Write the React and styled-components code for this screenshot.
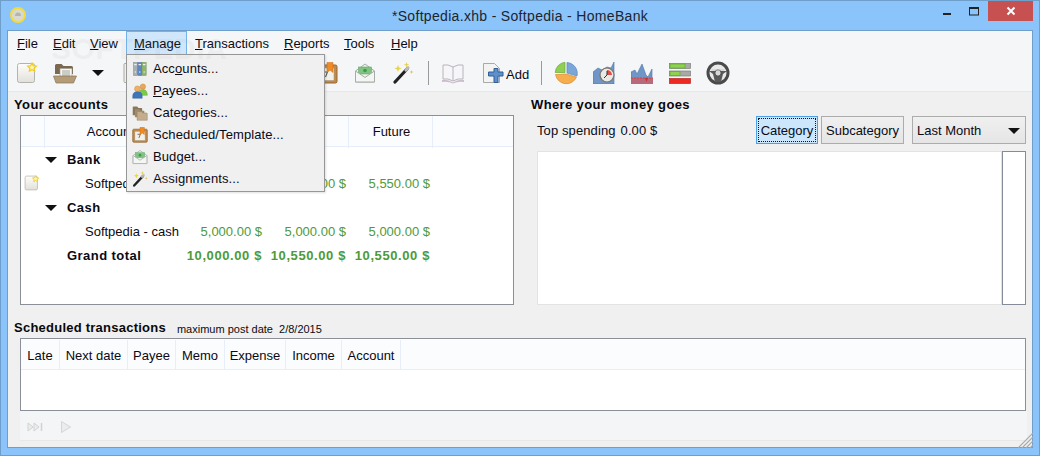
import React from "react";
import styled, { createGlobalStyle } from "styled-components";

const Global = createGlobalStyle`
  html, body { margin: 0; padding: 0; background: #8ac4fa; }
  body { font-family: "Liberation Sans", Arial, sans-serif; font-size: 13px; color: #0a0a14; }
`;

const Win = styled.div`
  position: relative; width: 1040px; height: 456px; box-sizing: border-box; overflow: hidden;
  background: #8ac4fa; border: 1px solid #6f9ecb; border-top-color: #6f9ecb;
  display: flex; flex-direction: column;
`;
const TitleBar = styled.div`
  position: relative; height: 29px; flex: none; display: flex; align-items: flex-start; justify-content: center;
`;
const AppIcon = styled.svg`
  position: absolute; left: 9px; top: 6px;
`;
const Title = styled.div`
  font-size: 14px; line-height: 16px; margin-top: 7px; color: #1c2430; letter-spacing: 0.32px;
`;
const Controls = styled.div`
  position: absolute; right: 6px; top: 0; display: flex; align-items: flex-start;
`;
const Ctl = styled.div`
  width: ${p => p.$w}px; height: 20px; display: flex; align-items: center; justify-content: center;
  background: ${p => p.$red ? "#c75050" : "transparent"};
`;
const Client = styled.div`
  margin-left: 6px; width: 1026px; height: 418px; box-sizing: border-box; flex: none;
  border: 1px solid #6f9ecb; background: #f0f0f0; display: flex; flex-direction: column;
`;
const MenuBar = styled.div`
  height: 24px; flex: none; background: #f5f6f8; display: flex; align-items: stretch; padding-left: 1px; box-sizing: border-box;
`;
const MenuTop = styled.div`
  position: relative; box-sizing: border-box; width: ${p => p.$w}px; padding-left: 8px; line-height: 25px;
  ${p => p.$open && "background:#cfe6fb; border:1px solid #72b1ea; padding-left:7px; line-height:23px;"}
`;
const Key = styled.span`text-decoration: underline; text-underline-offset: 1px;`;
const Popup = styled.div`
  position: absolute; left: -1px; top: 22px; width: 199px; height: 138px; box-sizing: border-box; z-index: 5;
  background: #f0f0f0; border: 1px solid #979797; padding: 3px 0 0 0; display: flex; flex-direction: column;
  box-shadow: 1px 1px 2px rgba(0,0,0,.12);
`;
const PopItem = styled.div`
  height: 22px; display: flex; align-items: center; gap: 5px; padding-left: 5px; line-height: 22px; white-space: nowrap; letter-spacing: 0.1px;
`;
const Toolbar = styled.div`
  height: 37px; flex: none; box-sizing: border-box; background: #f5f6f8; border-bottom: 1px solid #e6e7e9;
  display: flex; align-items: center;
`;
const Tool = styled.div`
  width: ${p => p.$w || 38}px; height: 24px; flex: none; display: flex; align-items: center; justify-content: center;
`;
const Sep = styled.div`
  width: 12px; height: 24px; flex: none; position: relative; display: flex; justify-content: center;
  &::before { content: ""; width: 1px; height: 100%; background: #9a9a9a; }
`;
const Spacer = styled.div`width: ${p => p.$w}px; flex: none;`;
const AddTool = styled.div`
  width: 63px; flex: none; display: flex; align-items: center; gap: 2px; padding-left: 10px; box-sizing: border-box; font-size: 13px;
`;
const AddLabel = styled.span`padding-top: 2px;`;
const Main = styled.div`
  flex: 1; padding: 4px 6px 0 6px; display: flex; flex-direction: column; min-height: 0;
`;
const Top = styled.div`display: flex; gap: 17px;`;
const LeftCol = styled.div`width: 500px; flex: none;`;
const RightCol = styled.div`width: 495px; flex: none;`;
const Heading = styled.div`
  font-weight: 700; line-height: 18px; height: 16px; letter-spacing: ${p => p.$ls ?? 0.38}px; color: #08080c; white-space: nowrap;
`;
const AccTable = styled.div`
  margin: 3px 0 0 6px; height: 190px; box-sizing: border-box; border: 1px solid #8a8f98; background: #fff; padding-top: 0;
`;
const AccHead = styled.div`
  display: grid; grid-template-columns: 24px 136px 84px 84px 84px 78px; height: 31px; box-sizing: border-box;
  background: #fbfcfd; border-bottom: 1px solid #e6eff9;
`;
const HeadCell = styled.div`
  text-align: center; line-height: 32px; padding-left: 2px; border-right: 1px solid #e6eff9; box-sizing: border-box;
`;
const AccRow = styled.div`
  display: grid; grid-template-columns: 24px 136px 84px 84px 84px; height: 24px; align-items: center; line-height: 22px;
  font-weight: ${p => p.$bold ? 700 : 400};
`;
const RowIcon = styled.div`display: flex; align-items: center; padding-left: 3px;`;
const Name = styled.div`
  padding-left: ${p => p.$indent}px; padding-top: 2px; display: flex; align-items: center; white-space: nowrap;
  ${p => p.$bold && "letter-spacing:0.45px;"}
`;
const Caret = styled.span`
  width: 0; height: 0; border-left: 6px solid transparent; border-right: 6px solid transparent; border-top: 6px solid #111;
  margin: 0 ${p => p.$mr || 0}px 0 ${p => p.$ml || 0}px;
`;
const Amount = styled.div`
  text-align: right; padding: 2px 3px 0 0; color: #4e9a36; white-space: nowrap; ${p => p.$bold && "letter-spacing:0.6px;"}
`;
const SpendRow = styled.div`
  margin-top: 4px; height: 28px; display: flex; align-items: center; padding-left: 6px; line-height: 20px;
`;
const SpendText = styled.div`flex: 1; display: flex; gap: 5px; letter-spacing: 0.1px; padding-top: 2px;`;
const Btn = styled.div`
  height: 28px; box-sizing: border-box; width: ${p => p.$w}px; flex: none; margin-left: ${p => p.$ml || 0}px; padding-top: 1px;
  border: 1px solid #acacac; background: linear-gradient(#f0f0f0, #e5e5e5);
  display: flex; align-items: center; justify-content: center; position: relative;
  ${p => p.$on && `
    background: #cce6fb; border-color: #4d9fe8;
    &::after { content: ""; position: absolute; inset: 1px; border: 1px dotted #111; }
  `}
`;
const Combo = styled(Btn)`
  justify-content: space-between; padding: 1px 5px 0 4px;
`;
const ChartRow = styled.div`margin: 7px 0 0 6px; height: 154px; display: flex;`;
const ChartArea = styled.div`
  width: 465px; flex: none; box-sizing: border-box; background: #fff; border: 1px solid #e3e3e3;
`;
const Legend = styled.div`
  width: 24px; flex: none; box-sizing: border-box; background: #fff; border: 1px solid #868b99;
`;
const SchedHead = styled.div`
  margin-top: 14px; display: flex; align-items: center; height: 16px; gap: 11px;
`;
const Small = styled.span`font-size: 11px; margin-top: 3px; white-space: pre;`;
const SchedTable = styled.div`
  margin: 3px 0 0 6px; height: 73px; flex: none; box-sizing: border-box; border: 1px solid #8a8f98; background: #fff; padding-top: 1px;
`;
const SchedHeadRow = styled.div`
  display: flex; height: 30px; box-sizing: border-box; background: #fbfcfd; border-bottom: 1px solid #e6eff9;
`;
const SchedCell = styled.div`
  flex: none; width: ${p => p.$w}px; box-sizing: border-box; text-align: center; line-height: 32px; border-right: 1px solid #e6eff9;
`;
const BottomBar = styled.div`
  margin-left: 6px; width: 1007px; height: 30px; flex: none; box-sizing: border-box; background: #f4f5f7; border-bottom: 1px solid #e8e8e8;
  display: flex; align-items: center; padding-left: 7px; gap: 17px; padding-top: 2px;
`;
const Grip = styled.svg`position: absolute; right: 6px; bottom: 7px; z-index: 3;`;
const Watermark = styled.div`
  position: absolute; left: 50px; top: 31px; font-size: 30px; font-weight: 700; letter-spacing: 0.5px; z-index: 9;
  color: rgba(170,170,170,.11); pointer-events: none; white-space: nowrap;
`;

const S = ({ size = 22, children }) => <svg width={size} height={size} viewBox="0 0 22 22">{children}</svg>;

const Star = ({ x, y, r = 3.4 }) => {
  const pts = [];
  for (let i = 0; i < 10; i++) {
    const a = -Math.PI / 2 + (i * Math.PI) / 5, q = i % 2 ? r * 0.5 : r;
    pts.push(`${(x + q * Math.cos(a)).toFixed(2)},${(y + q * Math.sin(a)).toFixed(2)}`);
  }
  return <polygon points={pts.join(" ")} fill="#fff6b0" stroke="#f2cd1e" strokeWidth="1.3" />;
};
const NoteIcon = ({ size }) => (
  <S size={size}>
    <defs><linearGradient id="n" x1="0" y1="0" x2="0" y2="1"><stop offset="0" stopColor="#fdfdfb" /><stop offset="1" stopColor="#e2e0da" /></linearGradient></defs>
    <rect x="1.5" y="1.5" width="17" height="19" rx="2" fill="url(#n)" stroke="#b5b3ad" />
    <Star x={16} y={5.5} r={4.4} />
  </S>
);
const FolderIcon = () => (
  <svg width="24" height="22" viewBox="0 0 24 22">
    <path d="M2 18V3.5Q2 2 3.5 2h5l2 2h8q1.5 0 1.5 1.5V12H2z" fill="#7b684e" />
    <rect x="7" y="6.5" width="12" height="9" fill="#f7f7f4" stroke="#9a9a90" strokeWidth=".6" />
    <path d="M9 9h8M9 11h8M9 13h8" stroke="#8b8b85" strokeWidth=".8" />
    <path d="M0.5 14h23l-3 7H3z" fill="#b49c78" stroke="#8b7656" strokeWidth=".7" />
  </svg>
);
const DocIcon = () => (
  <S><rect x="4" y="1.5" width="15" height="19" rx="1" fill="#f1f1ef" stroke="#a9a9a5" /></S>
);
const SchedIcon = ({ size }) => (
  <S size={size}>
    <rect x="1" y="3" width="20" height="18" rx="1.5" fill="#c08a4c" stroke="#98662e" />
    <rect x="4" y="6" width="14" height="12.5" fill="#f2f0ea" stroke="#a99c88" strokeWidth=".6" />
    <path d="M7.5 10h4l-2 5" fill="none" stroke="#555" strokeWidth="1.1" />
    <path d="M11 0.5h6v10l-3-2.4-3 2.4z" fill="#f08a24" stroke="#c96a12" strokeWidth=".5" />
  </S>
);
const EnvelopeIcon = ({ size }) => (
  <S size={size}>
    <path d="M1.5 9L11 2l9.5 7v11h-19z" fill="#eef1ee" stroke="#a6aca6" />
    <rect x="4.5" y="5" width="13" height="7" fill="#7fc480" stroke="#5aa45e" strokeWidth=".5" />
    <circle cx="11" cy="8.5" r="1.8" fill="#3f9a48" />
    <path d="M1.5 9l9.5 6.5L20.5 9v11h-19z" fill="#f4f6f4" stroke="#a6aca6" />
  </S>
);
const WandIcon = ({ size }) => (
  <S size={size}>
    <path d="M3 20L15 7" stroke="#222" strokeWidth="3.2" strokeLinecap="round" />
    <path d="M14 8l2-2.2" stroke="#bbb" strokeWidth="3.2" strokeLinecap="round" />
    <path d="M6 3l1 2.5L9.5 6.5 7 7.5 6 10 5 7.5 2.5 6.5 5 5.5z" fill="#e9d34a" />
    <path d="M14.5 0l.7 2 2 .7-2 .7-.7 2-.7-2-2-.7 2-.7z" fill="#e9d34a" />
    <path d="M19.5 8l.5 1.5 1.5.5-1.5.5-.5 1.5-.5-1.5-1.5-.5 1.5-.5z" fill="#d7c64a" />
  </S>
);
const BookIcon = () => (
  <svg width="24" height="22" viewBox="0 0 24 22">
    <path d="M12 5Q7 2 2 3v14q5-1 10 2 5-3 10-2V3q-5-1-10 2z" fill="#f6f5f7" stroke="#b9b4bd" />
    <path d="M12 5v14" stroke="#b9b4bd" />
    <path d="M1 18q6-1 11 2.5Q17 17 23 18v2q-6-1-11 1.5Q7 19 1 20z" fill="#cdbccb" />
  </svg>
);
const AddIcon = () => (
  <S>
    <path d="M1.5 1.5h11l5 5v14h-16z" fill="#f3f3f1" stroke="#a9a9a5" />
    <path d="M8 10h4V6.500h4V10h5v4h-5v6.500h-4V14H6.500v-4z" fill="#5d8fc9" stroke="#2f5f9c" strokeWidth="1" />
  </S>
);
const PieIcon = () => (
  <svg width="24" height="24" viewBox="0 0 24 24">
    <path d="M13 1.500A11 11 0 0 1 23 15L13 12z" fill="#7ba6d8" stroke="#5c87bb" strokeWidth=".7" />
    <path d="M22.500 16A11 11 0 0 1 1.500 13.500L12 13z" fill="#f5ad4e" stroke="#d78c2c" strokeWidth=".7" />
    <path d="M1.200 11.500A11 11 0 0 1 11 1.300v10.200z" fill="#8fd052" stroke="#6fa83a" strokeWidth=".7" />
  </svg>
);
const AreaClock = () => (
  <S>
    <path d="M0 10l5-4 4 2 5-3 4 1 3-6v22H0z" fill="#6f96c6" stroke="#4c75a8" strokeWidth=".6" />
    <circle cx="14" cy="13" r="7" fill="#e9e9e6" stroke="#77736c" strokeWidth="1.2" />
    <path d="M14 8a5 5 0 0 1 5 5h-5z" fill="#e0504a" />
    <path d="M14 13l-3 3M14 13V9" stroke="#333" strokeWidth="1" />
  </S>
);
const AreaRed = () => (
  <S>
    <path d="M0 10l4-2 2 4 5-10 4 11 2 2 4-8v15H0z" fill="#6f96c6" stroke="#4c75a8" strokeWidth=".6" />
    <rect x="0" y="16" width="22" height="6" fill="#b76a7c" />
    <path d="M0 16h22" stroke="#e5302a" strokeWidth=".8" strokeDasharray="2 1" />
    <path d="M14 16l1.500 4 1.500-4" fill="#c8302a" />
  </S>
);
const BarsIcon = () => (
  <S>
    <rect x=".5" y="1.500" width="21" height="5" fill="#a8a8a4" stroke="#7e807a" strokeWidth=".7" />
    <rect x="1" y="2" width="15" height="4" fill="#8ed24f" stroke="#5ea832" strokeWidth=".7" />
    <rect x=".5" y="9" width="21" height="5" fill="#a8a8a4" stroke="#7e807a" strokeWidth=".7" />
    <rect x="1" y="9.500" width="10" height="4" fill="#8ed24f" stroke="#5ea832" strokeWidth=".7" />
    <rect x=".5" y="16.500" width="21" height="5" fill="#ee2a20" stroke="#b8261e" strokeWidth=".7" />
  </S>
);
const WheelIcon = () => (
  <svg width="24" height="24" viewBox="0 0 24 24">
    <circle cx="12" cy="12" r="10" fill="#e9e9e9" stroke="#4a4a4a" strokeWidth="3" />
    <path d="M3 10h18l-4 3-2 8h-6l-2-8z" fill="#5a5a5a" />
    <circle cx="12" cy="12" r="3.200" fill="#d8d8d8" stroke="#444" />
    <path d="M5.500 9h13" stroke="#c7c7c7" strokeWidth="1" />
  </svg>
);
const BinderIcon = ({ size }) => (
  <S size={size}>
    <rect x="2" y="2" width="5.500" height="18" fill="#a7aeb4" stroke="#7a8186" strokeWidth=".6" />
    <rect x="8" y="2" width="5.500" height="18" fill="#5f88c0" stroke="#41689e" strokeWidth=".6" />
    <rect x="14" y="2" width="5.500" height="18" fill="#8fb66c" stroke="#66904a" strokeWidth=".6" />
    <path d="M3 5h3.500M9 5h3.500M15 5h3.500" stroke="#eee" strokeWidth="1.500" />
    <circle cx="4.700" cy="15" r="1" fill="#eee" /><circle cx="10.700" cy="15" r="1" fill="#eee" /><circle cx="16.700" cy="15" r="1" fill="#eee" />
  </S>
);
const PeopleIcon = ({ size }) => (
  <S size={size}>
    <circle cx="15" cy="5" r="3.700" fill="#e8a85a" stroke="#c4843c" strokeWidth=".6" />
    <path d="M10 15q0-6 5-6t6 6v2H10z" fill="#7dc94a" stroke="#5ea832" strokeWidth=".6" />
    <circle cx="7.500" cy="8" r="4" fill="#f0b062" stroke="#c4843c" strokeWidth=".6" />
    <path d="M1 21v-3q0-6 6.500-6T14 18v3z" fill="#3f74bc" stroke="#2d5a9a" strokeWidth=".6" />
  </S>
);
const CategoriesIcon = ({ size }) => (
  <S size={size}>
    <path d="M1 14V3q0-1 1-1h5l2 2h4q1 0 1 1v9z" fill="#8a775c" />
    <path d="M4 17V7q0-1 1-1h5l2 2h4q1 0 1 1v8z" fill="#a08b6c" />
    <path d="M7 21V10q0-1 1-1h5l2 2h5q1 0 1 1v9z" fill="#c3ad8c" stroke="#8f7a5c" strokeWidth=".6" />
  </S>
);

const Rows = [
  { group: true, name: "Bank" },
  { name: "Softpedia - bank", icon: true, v: ["5,000.00 $", "5,550.00 $", "5,550.00 $"] },
  { group: true, name: "Cash" },
  { name: "Softpedia - cash", v: ["5,000.00 $", "5,000.00 $", "5,000.00 $"] },
  { total: true, name: "Grand total", v: ["10,000.00 $", "10,550.00 $", "10,550.00 $"] },
];
const menus = [
  { k: "F", r: "ile", w: 36 }, { k: "E", r: "dit", w: 37 }, { k: "V", r: "iew", w: 44 },
  { k: "M", r: "anage", w: 61, open: true }, { k: "T", r: "ransactions", w: 89 }, { k: "R", r: "eports", w: 60 },
  { k: "T", r: "ools", w: 47 }, { k: "H", r: "elp", w: 50 },
];
const pop = [
  { I: BinderIcon, t: <>Acc<Key>o</Key>unts...</> },
  { I: PeopleIcon, t: <><Key>P</Key>ayees...</> },
  { I: CategoriesIcon, t: "Categories..." },
  { I: SchedIcon, t: "Scheduled/Template..." },
  { I: EnvelopeIcon, t: "Budget..." },
  { I: WandIcon, t: "Assignments..." },
];
const schedCols = [["Late", 39], ["Next date", 68], ["Payee", 48], ["Memo", 49], ["Expense", 61], ["Income", 56], ["Account", 59]];

export default function App() {
  return (
    <Win>
      <Global />
      <TitleBar>
        <AppIcon width="18" height="18" viewBox="0 0 18 18">
          <circle cx="8" cy="8" r="7" fill="#d9d9d2" stroke="#f2dc3c" strokeWidth="2" />
          <path d="M5 9q0-3.500 3-3.500T11 9z" fill="#b5b5ae" />
        </AppIcon>
        <Title>*Softpedia.xhb - Softpedia - HomeBank</Title>
        <Controls>
          <Ctl $w={27}><svg width="10" height="10"><rect x="0" y="7" width="8" height="2" fill="#222" /></svg></Ctl>
          <Ctl $w={27}><svg width="11" height="10"><rect x=".5" y="1.500" width="9" height="7.500" fill="none" stroke="#222" /><rect x="0" y="1" width="10" height="2" fill="#222" /></svg></Ctl>
          <Ctl $w={45} $red><svg width="10" height="10" viewBox="0 0 10 10"><path d="M1.500 1.500l7 7M8.500 1.500l-7 7" stroke="#fff" strokeWidth="2" /></svg></Ctl>
        </Controls>
      </TitleBar>
      <Client>
        <MenuBar>
          {menus.map((m, i) => (
            <MenuTop key={i} $w={m.w} $open={m.open}>
              <Key>{m.k}</Key>{m.r}
              {m.open && (
                <Popup>
                  {pop.map(({ I, t }, j) => (
                    <PopItem key={j}><I size={16} /><span>{t}</span></PopItem>
                  ))}
                </Popup>
              )}
            </MenuTop>
          ))}
        </MenuBar>
        <Toolbar>
          <Tool><NoteIcon /></Tool>
          <Tool><FolderIcon /></Tool>
          <Tool $w={28}><Caret /></Tool>
          <Tool><DocIcon /></Tool>
          <Spacer $w={158} />
          <Tool><SchedIcon /></Tool>
          <Tool><EnvelopeIcon /></Tool>
          <Tool><WandIcon /></Tool>
          <Sep />
          <Tool><BookIcon /></Tool>
          <AddTool><AddIcon /><AddLabel>Add</AddLabel></AddTool>
          <Sep />
          <Tool><PieIcon /></Tool>
          <Tool><AreaClock /></Tool>
          <Tool><AreaRed /></Tool>
          <Tool><BarsIcon /></Tool>
          <Tool><WheelIcon /></Tool>
        </Toolbar>
        <Main>
          <Top>
            <LeftCol>
              <Heading>Your accounts</Heading>
              <AccTable>
                <AccHead>
                  <HeadCell />
                  <HeadCell>Accounts</HeadCell>
                  <HeadCell>Bank</HeadCell>
                  <HeadCell>Today</HeadCell>
                  <HeadCell>Future</HeadCell>
                </AccHead>
                {Rows.map((r, i) => (
                  <AccRow key={i} $bold={r.group || r.total}>
                    <RowIcon>{r.icon && <NoteIcon size={16} />}</RowIcon>
                    {r.group ? (
                      <Name $indent={0} $bold><Caret $ml={0} $mr={10} />{r.name}</Name>
                    ) : (
                      <Name $indent={r.total ? 22 : 40} $bold={r.total}>{r.name}</Name>
                    )}
                    {r.v && r.v.map((a, j) => <Amount key={j} $bold={r.total}>{a}</Amount>)}
                  </AccRow>
                ))}
              </AccTable>
            </LeftCol>
            <RightCol>
              <Heading $ls={0.38}>Where your money goes</Heading>
              <SpendRow>
                <SpendText><span>Top spending</span><span>0.00 $</span></SpendText>
                <Btn $w={62} $on>Category</Btn>
                <Btn $w={83} $ml={3}>Subcategory</Btn>
                <Combo $w={114} $ml={8}><span>Last Month</span><Caret /></Combo>
              </SpendRow>
              <ChartRow>
                <ChartArea />
                <Legend />
              </ChartRow>
            </RightCol>
          </Top>
          <SchedHead>
            <Heading $ls={0.24}>Scheduled transactions</Heading>
            <Small>maximum post date  2/8/2015</Small>
          </SchedHead>
          <SchedTable>
            <SchedHeadRow>
              {schedCols.map(([t, w]) => <SchedCell key={t} $w={w}>{t}</SchedCell>)}
            </SchedHeadRow>
          </SchedTable>
          <BottomBar>
            <svg width="16" height="12" viewBox="0 0 16 12"><path d="M1 2l5 4-5 4zM7 2l5 4-5 4z" fill="#ececec" stroke="#d2d2d2" /><path d="M14.500 2v8" stroke="#d2d2d2" strokeWidth="1.500" /></svg>
            <svg width="12" height="14" viewBox="0 0 12 14"><path d="M1.500 1.500L10.500 7l-9 5.500z" fill="#ececec" stroke="#d6d6d6" /></svg>
          </BottomBar>
        </Main>
      </Client>
      <Grip width="15" height="15" viewBox="0 0 15 15">
        <path d="M15 0L0 15M15 4L4 15M15 8L8 15M15 12L12 15" stroke="#a9a9a9" strokeWidth="1.200" />
      </Grip>
      <Watermark>SOFTPEDIA</Watermark>
    </Win>
  );
}
